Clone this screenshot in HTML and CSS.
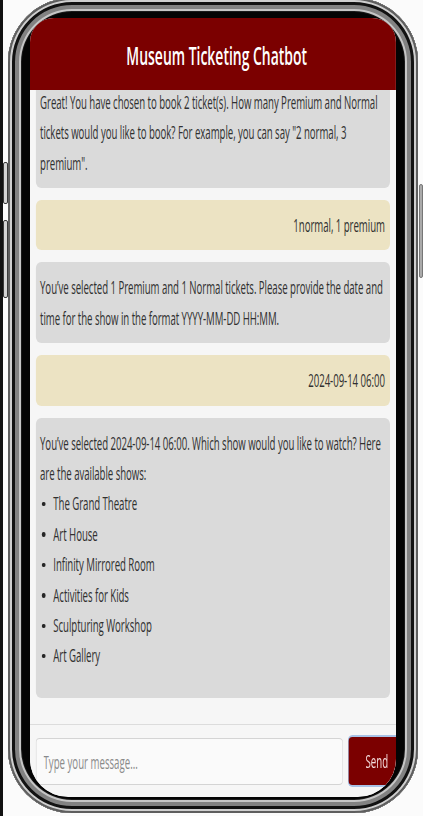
FILE: index.html
```html
<!DOCTYPE html>
<html lang="en">
<head>
<meta charset="utf-8">
<title>Museum Ticketing Chatbot</title>
<link rel="stylesheet" href="styles.css">
</head>
<body>
<div class="phone">
  <span class="side-btn side-btn--l1"></span>
  <span class="side-btn side-btn--l2"></span>
  <span class="side-btn side-btn--r1"></span>
  <div class="screen">
    <div class="screen-inner">
      <header class="header">
        <h1 class="title">Museum Ticketing Chatbot</h1>
      </header>
      <main class="chat">
        <div class="messages">
          <div class="msg msg--bot">Great! You have chosen to book 2 ticket(s). How many Premium and Normal tickets would you like to book? For example, you can say "2 normal, 3 premium".</div>
          <div class="msg msg--user">1normal, 1 premium</div>
          <div class="msg msg--bot">You’ve selected 1 Premium and 1 Normal tickets. Please provide the date and time for the show in the format YYYY-MM-DD HH:MM.</div>
          <div class="msg msg--user">2024-09-14 06:00</div>
          <div class="msg msg--bot">You’ve selected 2024-09-14 06:00. Which show would you like to watch? Here are the available shows:
            <ul class="shows">
              <li class="show">The Grand Theatre</li>
              <li class="show">Art House</li>
              <li class="show">Infinity Mirrored Room</li>
              <li class="show">Activities for Kids</li>
              <li class="show">Sculpturing Workshop</li>
              <li class="show">Art Gallery</li>
            </ul>
          </div>
        </div>
      </main>
      <form class="composer">
        <input class="composer-input" type="text" placeholder="Type your message...">
        <button class="composer-send" type="button">Send</button>
      </form>
    </div>
  </div>
</div>
</body>
</html>
```

FILE: styles.css
```css
html, body {
  margin: 0;
  padding: 0;
}

body {
  height: 816px;
  overflow: hidden;
  background: #fbfbfb;
  border-left: 3px solid #111;
  padding-left: 5px;
  box-sizing: border-box;
  display: flex;
  align-items: flex-start;
  font-family: "Open Sans", "Noto Sans", sans-serif;
}

.phone {
  position: relative;
  flex: none;
  width: 410px;
  height: 815px;
  margin-top: -2px;
  box-sizing: border-box;
  padding: 20px 22px 16px 22px;
  border-radius: 64px;
  background: #040404;
  box-shadow:
    inset 0 0 0 2px #5e5e5e,
    inset 0 0 0 4px #cfcfcf,
    inset 0 0 0 7px #121212,
    inset 0 0 0 11px #828282,
    inset 0 0 0 13px #c6c6c6,
    inset 0 0 0 14px #1a1a1a;
}

.side-btn {
  position: absolute;
  width: 3px;
  background: #d4d4d4;
  border: 1px solid #3a3a3a;
  border-radius: 2px;
}

.side-btn--l1 {
  left: -5px;
  top: 164px;
  height: 40px;
}

.side-btn--l2 {
  left: -5px;
  top: 222px;
  height: 76px;
}

.side-btn--r1 {
  right: -5px;
  top: 186px;
  height: 92px;
  width: 2px;
  background: #aaa;
  border-color: #777;
}

.screen {
  width: 366px;
  height: 779px;
  border-radius: 24px 24px 38px 38px;
  overflow: hidden;
  background: #f6f6f6;
}

.screen-inner {
  width: 682px;
  height: 779px;
  transform: scaleX(0.5365);
  transform-origin: 0 0;
  display: flex;
  flex-direction: column;
}

.header {
  flex: none;
  height: 72px;
  background: #7b0000;
  display: flex;
  align-items: center;
  justify-content: center;
  padding-left: 14px;
}

.title {
  margin: 0;
  color: #ffffff;
  font-size: 26px;
  font-weight: 600;
  line-height: 1;
  padding-top: 2px;
}

.chat {
  flex: none;
  height: 634px;
  overflow: hidden;
  padding: 0 11.2px;
  background: #f6f6f6;
}

.messages {
  margin-top: -13.25px;
}

.msg {
  padding: 10px 9.3px 10px 7.5px;
  margin-bottom: 12px;
  border-radius: 10px / 6px;
  font-size: 18px;
  line-height: 30.4px;
  letter-spacing: -0.1px;
  color: #303030;
}

.msg--bot {
  background: #dadada;
}

.msg--user {
  background: #ece3c3;
  text-align: right;
}

.shows {
  list-style: none;
  margin: 0 0 17px 0;
  padding: 0;
}

.show::before {
  content: "";
  display: inline-block;
  width: 6.5px;
  height: 4.5px;
  border-radius: 50%;
  background: #262626;
  margin: 0 14.6px 0 3.6px;
  vertical-align: 4px;
}

.composer {
  flex: none;
  height: 72px;
  margin: 0;
  box-sizing: border-box;
  border-top: 1px solid #dcdcdc;
  padding: 13px 0 0 11.2px;
  display: flex;
  gap: 11.2px;
  align-items: flex-start;
  background: #f6f6f6;
}

.composer-input {
  flex: none;
  width: 572px;
  height: 47px;
  box-sizing: border-box;
  border: 1px solid #d4d4d4;
  border-radius: 7px / 4px;
  background: #fafafa;
  padding: 0 13px;
  font-family: "Open Sans", "Noto Sans", sans-serif;
  font-size: 18px;
  color: #333;
}

.composer-input::placeholder {
  color: #8a8a8a;
}

.composer-send {
  flex: none;
  width: 104px;
  height: 48px;
  margin-top: -1px;
  border: none;
  border-radius: 7px / 4px;
  background: #7b0000;
  color: #f4dcdc;
  box-shadow: 0 0 0 2px #a8c2e6;
  font-family: "Open Sans", "Noto Sans", sans-serif;
  font-size: 18px;
  padding: 0;
}
```
